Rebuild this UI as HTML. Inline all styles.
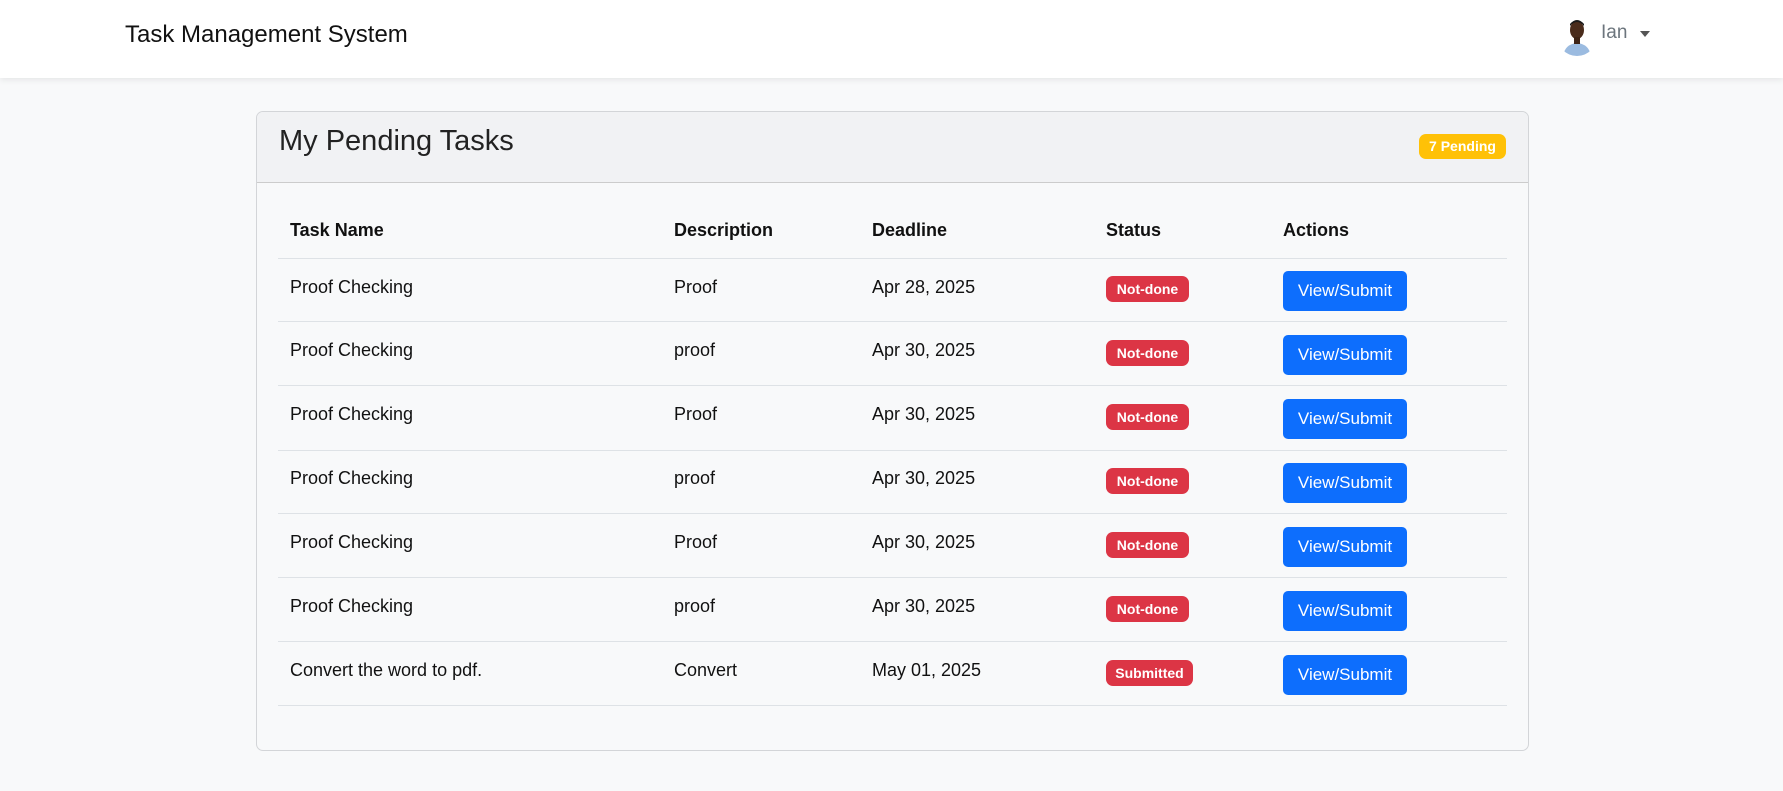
<!DOCTYPE html>
<html><head><meta charset="utf-8"><style>
*{box-sizing:border-box;margin:0;padding:0}
body{width:1783px;height:791px;background:#f8f9fa;font-family:"Liberation Sans",sans-serif;color:#212529;position:relative;overflow:hidden}
.nav{position:absolute;left:0;top:0;width:1783px;height:78px;background:#fff;box-shadow:0 2px 6px rgba(0,0,0,.08)}
.brand{position:absolute;left:125px;top:21px;font-size:24px;color:#111}
.av{position:absolute;left:1557px;top:16px;width:40px;height:40px;border-radius:50%;overflow:hidden;background:#fff}
.user{position:absolute;left:1601px;top:22px;font-size:19px;color:#6c757d}
.caret{position:absolute;left:1640px;top:31px;border-left:5px solid transparent;border-right:5px solid transparent;border-top:6px solid #555}
.card{position:absolute;left:256px;top:111px;width:1273px;height:640px;border:1px solid #d3d5d8;border-radius:7px;background:#f8f9fa;overflow:hidden}
.ch{height:71px;background:#f1f2f4;border-bottom:1px solid #ccc;position:relative}
.ch h2{position:absolute;left:22px;top:13px;font-weight:normal;font-size:29px;color:#222}
.pend{position:absolute;left:1162px;top:22px;width:87px;height:25px;border-radius:7px;background:#ffc107;color:#fff;font-weight:bold;font-size:14px;text-align:center;line-height:25px}
.hr{position:absolute;left:21px;width:1229px;height:1px;background:#dee2e6}
.row{position:absolute;left:0;width:1273px;height:64px}
.row span{position:absolute;font-size:18px;color:#111}
.b{position:absolute;height:26px;border-radius:7px;background:#dc3545;color:#fff;font-weight:bold;font-size:14px;text-align:center;line-height:26px}
.btn{position:absolute;left:1026px;width:124px;height:40px;border-radius:5px;background:#0d6efd;color:#fff;font-size:17px;text-align:center;line-height:40px}
</style></head><body>
<div class="nav">
<div class="brand">Task Management System</div>
<div class="av"><svg width="40" height="40" viewBox="0 0 40 40"><path d="M6 40 Q8 28 20 27 Q32 28 34 40Z" fill="#9bbbe0"/><ellipse cx="20" cy="14" rx="7" ry="9" fill="#4a2c1c"/><path d="M13 10 Q20 2 27 10 L27 8 Q20 0 13 8Z" fill="#1a1a1a"/><rect x="17" y="21" width="6" height="7" fill="#3e2416"/></svg></div>
<div class="user">Ian</div><div class="caret"></div>
</div>
<div class="card">
<div class="ch"><h2>My Pending Tasks</h2><div class="pend">7 Pending</div></div>
<div style="position:absolute;top:108px;left:0;width:100%;font-weight:bold;font-size:18px;color:#111">
<span style="position:absolute;left:33px">Task Name</span><span style="position:absolute;left:417px">Description</span><span style="position:absolute;left:615px">Deadline</span><span style="position:absolute;left:849px">Status</span><span style="position:absolute;left:1026px">Actions</span></div>
<div class="hr" style="top:146px"></div>
<div class="row" style="top:146px"><span style="left:33px;top:19px">Proof Checking</span><span style="left:417px;top:19px">Proof</span><span style="left:615px;top:19px">Apr 28, 2025</span><div class="b" style="left:849px;top:18px;width:83px">Not-done</div><div class="btn" style="top:13px">View/Submit</div></div>
<div class="hr" style="top:209px"></div>
<div class="row" style="top:209px"><span style="left:33px;top:19px">Proof Checking</span><span style="left:417px;top:19px">proof</span><span style="left:615px;top:19px">Apr 30, 2025</span><div class="b" style="left:849px;top:19px;width:83px">Not-done</div><div class="btn" style="top:14px">View/Submit</div></div>
<div class="hr" style="top:273px"></div>
<div class="row" style="top:273px"><span style="left:33px;top:19px">Proof Checking</span><span style="left:417px;top:19px">Proof</span><span style="left:615px;top:19px">Apr 30, 2025</span><div class="b" style="left:849px;top:19px;width:83px">Not-done</div><div class="btn" style="top:14px">View/Submit</div></div>
<div class="hr" style="top:338px"></div>
<div class="row" style="top:338px"><span style="left:33px;top:18px">Proof Checking</span><span style="left:417px;top:18px">proof</span><span style="left:615px;top:18px">Apr 30, 2025</span><div class="b" style="left:849px;top:18px;width:83px">Not-done</div><div class="btn" style="top:13px">View/Submit</div></div>
<div class="hr" style="top:401px"></div>
<div class="row" style="top:401px"><span style="left:33px;top:19px">Proof Checking</span><span style="left:417px;top:19px">Proof</span><span style="left:615px;top:19px">Apr 30, 2025</span><div class="b" style="left:849px;top:19px;width:83px">Not-done</div><div class="btn" style="top:14px">View/Submit</div></div>
<div class="hr" style="top:465px"></div>
<div class="row" style="top:465px"><span style="left:33px;top:19px">Proof Checking</span><span style="left:417px;top:19px">proof</span><span style="left:615px;top:19px">Apr 30, 2025</span><div class="b" style="left:849px;top:19px;width:83px">Not-done</div><div class="btn" style="top:14px">View/Submit</div></div>
<div class="hr" style="top:529px"></div>
<div class="row" style="top:529px"><span style="left:33px;top:19px">Convert the word to pdf.</span><span style="left:417px;top:19px">Convert</span><span style="left:615px;top:19px">May 01, 2025</span><div class="b" style="left:849px;top:19px;width:87px">Submitted</div><div class="btn" style="top:14px">View/Submit</div></div>
<div class="hr" style="top:593px"></div>
</div>
</body></html>
